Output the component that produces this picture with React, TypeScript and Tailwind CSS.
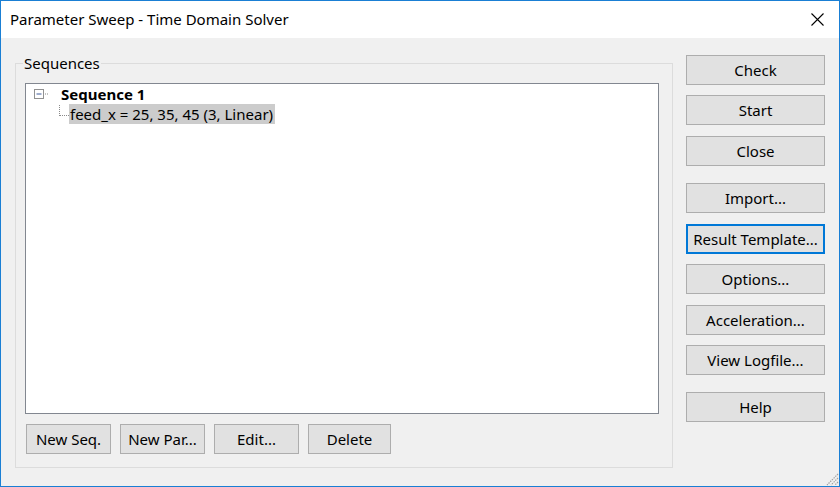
import React from 'react';

const font = { fontFamily: '"Segoe UI", "Noto Sans", "Open Sans", sans-serif' };

function Btn({ label, focused, className }: { label: string; focused?: boolean; className?: string }) {
  return (
    <button
      className={
        'h-[30px] bg-[#e1e1e1] text-[15px] leading-none text-black flex items-center justify-center ' +
        (focused ? 'border-2 border-[#0078d7] ' : 'border border-[#adadad] ') +
        (className || '')
      }
    >
      {label}
    </button>
  );
}

export default function App() {
  return (
    <div className="w-[840px] h-[487px] border border-[#1a7fd4] flex flex-col bg-[#f0f0f0] text-black" style={font}>
      {/* Title bar */}
      <div className="h-[37px] bg-white flex items-center justify-between shrink-0">
        <span className="ml-[9px] text-[15px]">Parameter Sweep - Time Domain Solver</span>
        <svg width="13" height="13" viewBox="0 0 13 13" className="mr-[15px]">
          <path d="M0.5 0.5 L12.5 12.5 M12.5 0.5 L0.5 12.5" stroke="#000" strokeWidth="1.1" />
        </svg>
      </div>

      {/* Body */}
      <div className="flex-1 flex relative">
        <div className="pl-[14px] pt-[16px]">
          <fieldset className="w-[658px] h-[414px] border border-[#dcdcdc] px-[9px] pt-[11px]">
            <legend className="ml-[-2px] px-[1px] text-[15px] leading-[18px]">Sequences</legend>
            <div className="w-[634px] h-[331px] bg-white border border-[#828790]">
              {/* tree root */}
              <div className="flex items-center h-[20px]">
                <svg width="30" height="20" viewBox="0 0 30 20" className="ml-[8px]">
                  <rect x="0.5" y="5.5" width="9" height="9" fill="#fff" stroke="#919191" />
                  <path d="M2.5 10 H7.5" stroke="#3c5a9a" strokeWidth="1" />
                  <path d="M11 10 H12 M13 10 H14" stroke="#8a8a8a" strokeWidth="1" />
                </svg>
                <span className="ml-[-3px] font-bold text-[15px] leading-[20px]">Sequence 1</span>
              </div>
              {/* tree child */}
              <div className="flex items-center h-[20px]">
                <svg width="10" height="20" viewBox="0 0 10 20" className="ml-[33px]">
                  <path d="M0.5 1 V2 M0.5 3 V4 M0.5 5 V6 M0.5 7 V8 M0.5 9 V10 M0.5 11 V12" stroke="#8a8a8a" strokeWidth="1" />
                  <path d="M1 11.5 H2 M3 11.5 H4 M5 11.5 H6 M7 11.5 H8 M9 11.5 H10" stroke="#8a8a8a" strokeWidth="1" />
                </svg>
                <span className="bg-[#cccccc] text-[15px] leading-[20px] pl-[1px] pr-[2px]">
                  feed_x = 25, 35, 45 (3, Linear)
                </span>
              </div>
            </div>
            <div className="flex gap-[9px] mt-[10px] ml-[1px]">
              <Btn label="New Seq." className="w-[85px]" />
              <Btn label="New Par..." className="w-[85px]" />
              <Btn label="Edit..." className="w-[85px]" />
              <Btn label="Delete" className="w-[83px]" />
            </div>
          </fieldset>
        </div>

        {/* Right button column */}
        <div className="ml-[13px] pt-[17px] flex flex-col">
          <Btn label="Check" className="w-[139px]" />
          <Btn label="Start" className="w-[139px] mt-[10px]" />
          <Btn label="Close" className="w-[139px] mt-[11px]" />
          <Btn label="Import..." className="w-[139px] mt-[17px]" />
          <Btn label="Result Template..." focused className="w-[139px] mt-[11px]" />
          <Btn label="Options..." className="w-[139px] mt-[10px]" />
          <Btn label="Acceleration..." className="w-[139px] mt-[11px]" />
          <Btn label="View Logfile..." className="w-[139px] mt-[10px]" />
          <Btn label="Help" className="w-[139px] mt-[17px]" />
        </div>

        {/* size grip */}
        <svg width="14" height="14" viewBox="0 0 14 14" className="absolute right-0 bottom-0">
          <path d="M13 2 L2 13 M13 6 L6 13 M13 10 L10 13" stroke="#a0a0a0" strokeWidth="1.2" strokeDasharray="1.4 1" />
        </svg>
      </div>
    </div>
  );
}
